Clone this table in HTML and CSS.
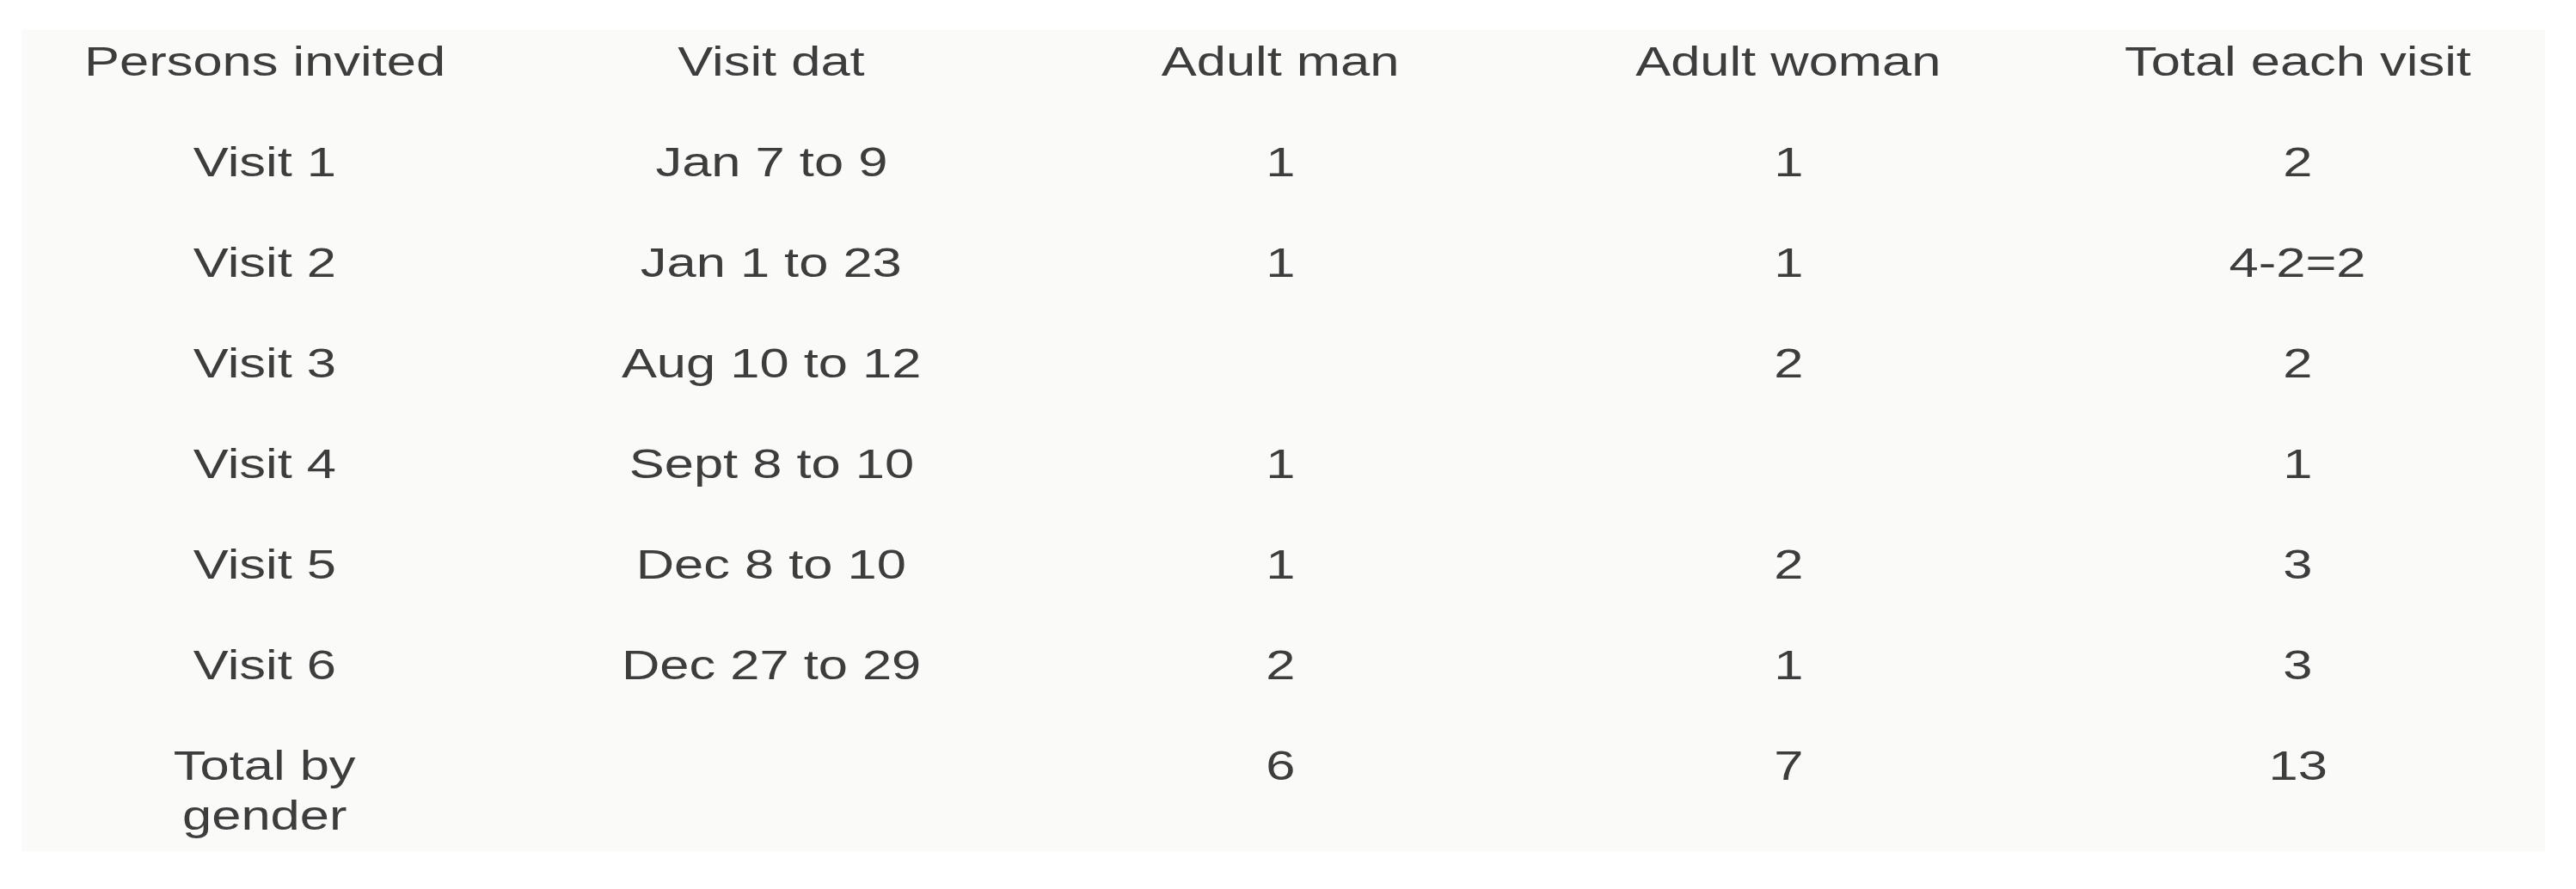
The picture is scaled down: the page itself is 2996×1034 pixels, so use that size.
FILE: index.html
```html
<!DOCTYPE html>
<html lang="en">
<head>
<meta charset="utf-8">
<title>Visits</title>
<link rel="stylesheet" href="styles.css">
</head>
<body>
<div class="panel">
  <div class="grid">
    <div class="cell"><span class="t">Persons invited</span></div>
    <div class="cell"><span class="t">Visit dat</span></div>
    <div class="cell"><span class="t">Adult man</span></div>
    <div class="cell"><span class="t">Adult woman</span></div>
    <div class="cell"><span class="t">Total each visit</span></div>

    <div class="cell"><span class="t">Visit 1</span></div>
    <div class="cell"><span class="t">Jan 7 to 9</span></div>
    <div class="cell"><span class="t">1</span></div>
    <div class="cell"><span class="t">1</span></div>
    <div class="cell"><span class="t">2</span></div>

    <div class="cell"><span class="t">Visit 2</span></div>
    <div class="cell"><span class="t">Jan 1 to 23</span></div>
    <div class="cell"><span class="t">1</span></div>
    <div class="cell"><span class="t">1</span></div>
    <div class="cell"><span class="t">4-2=2</span></div>

    <div class="cell"><span class="t">Visit 3</span></div>
    <div class="cell"><span class="t">Aug 10 to 12</span></div>
    <div class="cell"></div>
    <div class="cell"><span class="t">2</span></div>
    <div class="cell"><span class="t">2</span></div>

    <div class="cell"><span class="t">Visit 4</span></div>
    <div class="cell"><span class="t">Sept 8 to 10</span></div>
    <div class="cell"><span class="t">1</span></div>
    <div class="cell"></div>
    <div class="cell"><span class="t">1</span></div>

    <div class="cell"><span class="t">Visit 5</span></div>
    <div class="cell"><span class="t">Dec 8 to 10</span></div>
    <div class="cell"><span class="t">1</span></div>
    <div class="cell"><span class="t">2</span></div>
    <div class="cell"><span class="t">3</span></div>

    <div class="cell"><span class="t">Visit 6</span></div>
    <div class="cell"><span class="t">Dec 27 to 29</span></div>
    <div class="cell"><span class="t">2</span></div>
    <div class="cell"><span class="t">1</span></div>
    <div class="cell"><span class="t">3</span></div>

    <div class="cell"><span class="t">Total by<br>gender</span></div>
    <div class="cell"></div>
    <div class="cell"><span class="t">6</span></div>
    <div class="cell"><span class="t">7</span></div>
    <div class="cell"><span class="t">13</span></div>
  </div>
</div>
</body>
</html>
```

FILE: styles.css
```css
html, body {
  margin: 0;
  padding: 0;
  background: #ffffff;
}

.panel {
  margin: 35px 0 0 25px;
  width: 2935px;
  height: 955px;
  box-sizing: border-box;
  padding-top: 8px;
  background: #fafaf9;
  font-family: "Liberation Sans", Arial, sans-serif;
  font-size: 48px;
  line-height: 58px;
  color: #3d3d3d;
}

.grid {
  display: grid;
  grid-template-columns: 566px 612px 572px 610px 575px;
  row-gap: 59px;
}

.cell {
  text-align: center;
}

.t {
  display: inline-block;
  transform: scaleX(1.28);
}
```
